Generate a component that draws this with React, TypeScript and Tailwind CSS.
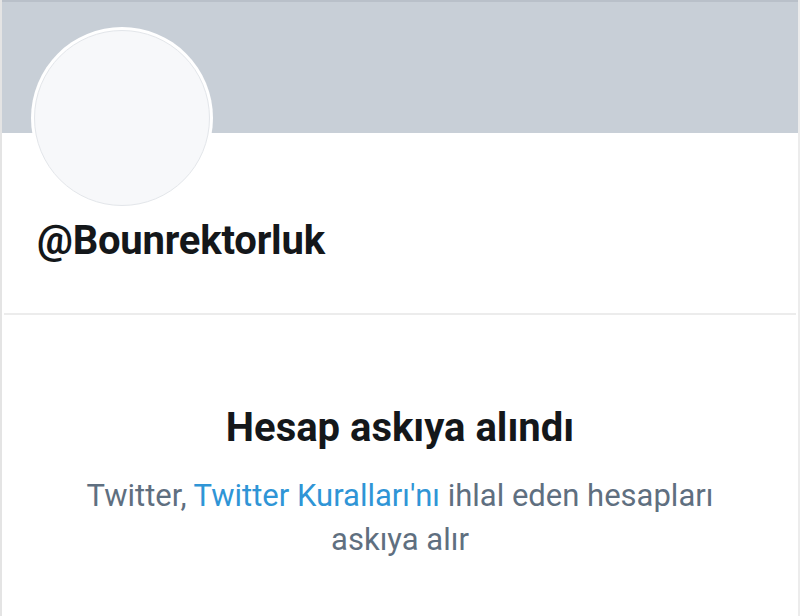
import React from "react";

export default function App() {
  return (
    <div
      className="w-[800px] h-[616px] bg-white overflow-hidden border-l-2 border-r-2 border-l-[#e4e4e4] border-r-[#ececec] flex flex-col"
      style={{ fontFamily: "Roboto, 'Noto Sans', sans-serif" }}
    >
      <div className="h-[133px] shrink-0 bg-[#c8cfd7] border-t-2 border-t-[#b9c0c9]" />
      <div className="px-[29px] -mt-[106px] flex">
        <div className="w-[182px] h-[182px] rounded-full bg-white p-[3px]">
          <div className="w-full h-full rounded-full bg-[#f7f8fa] border border-[#e3e6ea]" />
        </div>
      </div>
      <div className="pl-[35px] mt-[8px] text-[40px] leading-[48px] font-bold text-[#14171a] tracking-[-0.2px]">
        @Bounrektorluk
      </div>
      <div className="mt-[48px] h-[2px] bg-[#ececec] mx-[2px]" />
      <div className="flex flex-col items-center mt-[91px]">
        <div className="text-[40px] leading-[44px] font-bold text-[#14171a]">
          Hesap askıya alındı
        </div>
        <div className="mt-[24px] text-[31px] leading-[44px] text-[#5f6f80] text-center w-[740px]">
          Twitter, <span className="text-[#2f95d6]">Twitter Kuralları'nı</span> ihlal eden hesapları
          <br />
          askıya alır
        </div>
      </div>
    </div>
  );
}
